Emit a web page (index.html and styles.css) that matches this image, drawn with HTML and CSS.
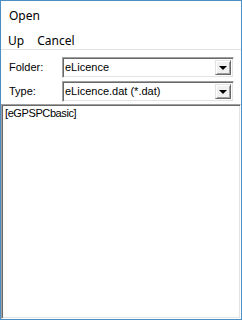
FILE: index.html
```html
<!DOCTYPE html>
<html lang="en">
<head>
  <meta charset="UTF-8" />
  <meta name="viewport" content="width=device-width, initial-scale=1.0"/>
  <title>Open</title>
  <link rel="stylesheet" href="styles.css">
</head>
<body>
  <div class="window">
    <div class="title">Open</div>

    <!-- Menu -->
    <div class="menu">
      <span>Up</span>
      <span>Cancel</span>
    </div>

    <!-- Folder / type pickers -->
    <div class="fields">
      <label class="label">Folder:</label>
      <div class="combo">
        <span class="combo-text">eLicence</span>
        <span class="drop"><span class="arrow"></span></span>
      </div>
      <label class="label">Type:</label>
      <div class="combo">
        <span class="combo-text">eLicence.dat (*.dat)</span>
        <span class="drop"><span class="arrow"></span></span>
      </div>
    </div>

    <!-- File list -->
    <div class="listbox">
      <div class="item">[eGPSPCbasic]</div>
    </div>
  </div>
</body>
</html>
```

FILE: styles.css
```css
html, body {
  margin: 0;
  padding: 0;
}
body {
  width: 242px;
  height: 320px;
  background: #fff;
}
.window {
  box-sizing: border-box;
  width: 242px;
  height: 320px;
  border: 1px solid #4b8ec4;
  display: flex;
  flex-direction: column;
  background: #fff;
  font-family: "Noto Sans", sans-serif;
  font-size: 12px;
  color: #000;
}
.title {
  padding: 7px 8px 0;
  line-height: 16px;
}
.menu {
  display: flex;
  gap: 13px;
  margin-top: 9px;
  padding: 0 7px;
  line-height: 16px;
  border-bottom: 1px solid #e3e3e3;
}
.fields {
  display: grid;
  grid-template-columns: 53px 172px;
  grid-auto-rows: 21px;
  row-gap: 3px;
  margin-top: 7px;
  padding-left: 8px;
  font-family: "Liberation Sans", Arial, sans-serif;
  font-size: 11px;
}
.label {
  line-height: 21px;
}
.combo {
  box-sizing: border-box;
  display: flex;
  align-items: center;
  background: #fff;
  border-top: 1px solid #a0a0a0;
  border-left: 1px solid #a0a0a0;
  border-right: 1px solid #fff;
  border-bottom: 1px solid #fff;
  box-shadow: inset 1px 1px 0 #696969, inset -1px -1px 0 #e3e3e3;
  padding: 2px;
}
.combo-text {
  flex: 1;
  line-height: 15px;
  white-space: nowrap;
  overflow: hidden;
}
.drop {
  box-sizing: border-box;
  width: 16px;
  height: 15px;
  background: #f0f0f0;
  border-top: 1px solid #e3e3e3;
  border-left: 1px solid #e3e3e3;
  border-right: 1px solid #696969;
  border-bottom: 1px solid #696969;
  box-shadow: inset 1px 1px 0 #fff, inset -1px -1px 0 #a0a0a0;
  display: flex;
  align-items: center;
  justify-content: center;
}
.arrow {
  width: 0;
  height: 0;
  border-left: 4px solid transparent;
  border-right: 4px solid transparent;
  border-top: 4px solid #000;
  margin-top: 1px;
}
.listbox {
  flex: 1;
  margin-top: 2px;
  background: #fff;
  border-top: 1px solid #a0a0a0;
  border-left: 1px solid #a0a0a0;
  border-right: 1px solid #fff;
  border-bottom: 1px solid #fff;
  box-shadow: inset 1px 1px 0 #696969, inset -1px -1px 0 #e3e3e3;
  padding: 1px 2px 2px;
  font-family: "Liberation Sans", Arial, sans-serif;
  font-size: 11px;
}
.item {
  padding-left: 1px;
  line-height: 14px;
  letter-spacing: -0.4px;
}
```
